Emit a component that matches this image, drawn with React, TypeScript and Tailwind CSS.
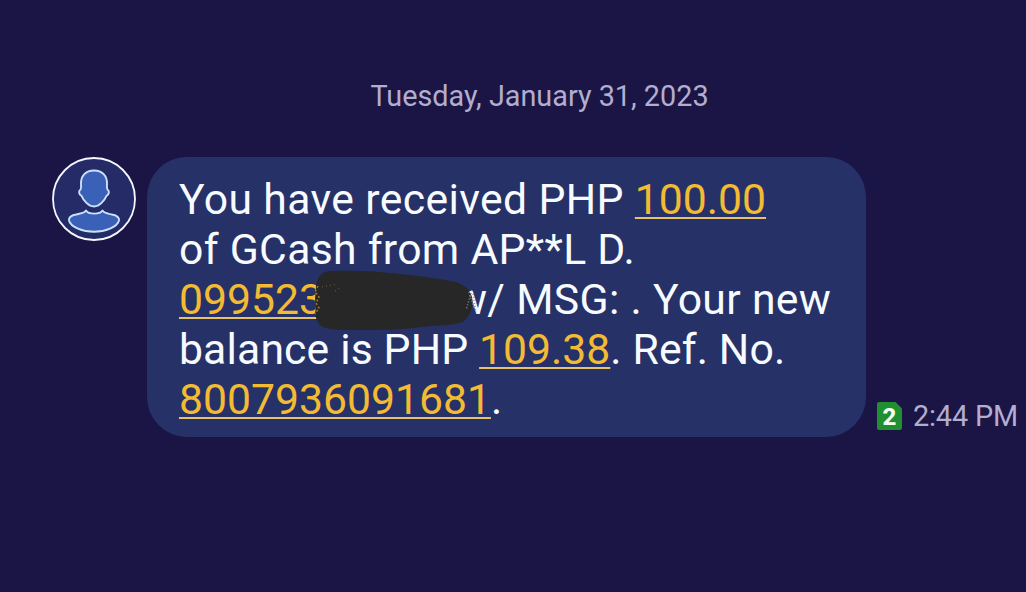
function Avatar() {
  return (
    <svg className="size-[84px] shrink-0" viewBox="0 0 84 84" fill="none">
      <circle cx="42" cy="42" r="41" fill="#242b67" stroke="#f4f7ff" strokeWidth="1.8" />
      <g fill="#3a60b8" stroke="#c9e2fa" strokeWidth="1.9" strokeLinejoin="round">
        <path d="M42 13.500C33.500 13.500 29 19 29 26.500C29 29.500 29.500 31 28.500 32.500C26.300 34 26.800 37.600 29.500 38.800C31.500 43.500 36.500 49.500 42 49.500C47.500 49.500 52.500 43.500 54.500 38.800C57.200 37.600 57.700 34 55.500 32.500C54.500 31 55 29.500 55 26.500C55 19 50.500 13.500 42 13.500Z" />
        <path d="M34 53.500C32 56.500 28.500 56.300 24 57.500C19 58.500 16.500 60.500 17 63.500C18.500 70 31 74.800 42 74.800C53 74.800 65.500 70 67 63.500C67.500 60.500 65 58.500 60 57.500C55.500 56.300 52.500 56.500 50.500 53.500C48 57.600 36.500 57.600 34 53.500Z" />
      </g>
    </svg>
  );
}

function SimBadge() {
  return (
    <div className="relative flex h-7 w-[25px] items-center justify-center">
      <svg className="absolute inset-0 h-7 w-[25px]" viewBox="0 0 25 28">
        <path d="M2 0H18.500L25 6.500V26Q25 28 23 28H2Q0 28 0 26V2Q0 0 2 0Z" fill="#1f8f2f" />
      </svg>
      <span className="relative pt-px text-[24px] leading-7 font-extrabold text-[#f2fff2]">2</span>
    </div>
  );
}

function Scribble() {
  return (
    <svg className="absolute top-[111px] left-[165px] h-[66px] w-[165px]" viewBox="0 0 165 66">
      <path
        d="M4 17C6 8 10 3 19 3C40 2 65 3 88 6C108 8 130 11 144 14C153 17 158 22 160 29C162 38 158 49 151 54C140 58 125 57 108 59C90 62 70 62 45 62C28 62 15 62 9 58C4 53 2 46 4 39C2 31 4 25 4 17Z"
        fill="#272727"
      />
      <g fill="none" strokeWidth="1.5">
        <path d="M6 18L3 24L7 29L4 35L7 40L3 46" stroke="#9b7830" strokeDasharray="2 2" />
        <path d="M10 19L25 16M23 23L28 20" stroke="#59503a" strokeDasharray="1 3" />
        <path d="M160 22L154 42M161 26L164 44M157 24L162 40" stroke="#8e8e94" strokeDasharray="1 2" />
      </g>
    </svg>
  );
}

function Link({ children }: { children: string }) {
  return (
    <span className="tracking-normal text-[#f2bb33] underline decoration-[#e6c36b] decoration-2 underline-offset-[3px]">
      {children}
    </span>
  );
}

export default function App() {
  return (
    <div className="h-[592px] w-[1026px] overflow-hidden bg-[#1b1545] font-['Roboto',sans-serif]">
      <div className="flex h-[157px] justify-center pt-[79px] pl-[53px] text-[28.800px] leading-[34px] text-[#b3adcf]">
        Tuesday, January 31, 2023
      </div>
      <div className="flex items-start pl-[52px]">
        <Avatar />
        <div className="relative ml-[11px] h-[280px] w-[719px] shrink-0 rounded-[40px] bg-[#263168] pt-[17px] pl-8 text-[42.700px] leading-[50px] whitespace-nowrap text-[#f7fbff]">
          <p className="tracking-[0.380px]">
            You have received PHP <Link>100.00</Link>
          </p>
          <p className="tracking-[0.300px]">of GCash from AP**L D.</p>
          <p className="tracking-[0.340px]">
            <Link>099523</Link>
            <span className="inline-block w-[121px]" /> w/ MSG: . Your new
          </p>
          <p className="tracking-[0.150px]">
            balance is PHP <Link>109.38</Link>. Ref. No.
          </p>
          <p>
            <Link>8007936091681</Link>.
          </p>
          <Scribble />
        </div>
        <div className="ml-[11px] flex items-center gap-[11px] self-end pb-[7px] text-[28.800px] leading-7 whitespace-nowrap text-[#b3adcf]">
          <SimBadge />
          <span className="tracking-[-0.150px]">2:44 PM</span>
        </div>
      </div>
    </div>
  );
}
